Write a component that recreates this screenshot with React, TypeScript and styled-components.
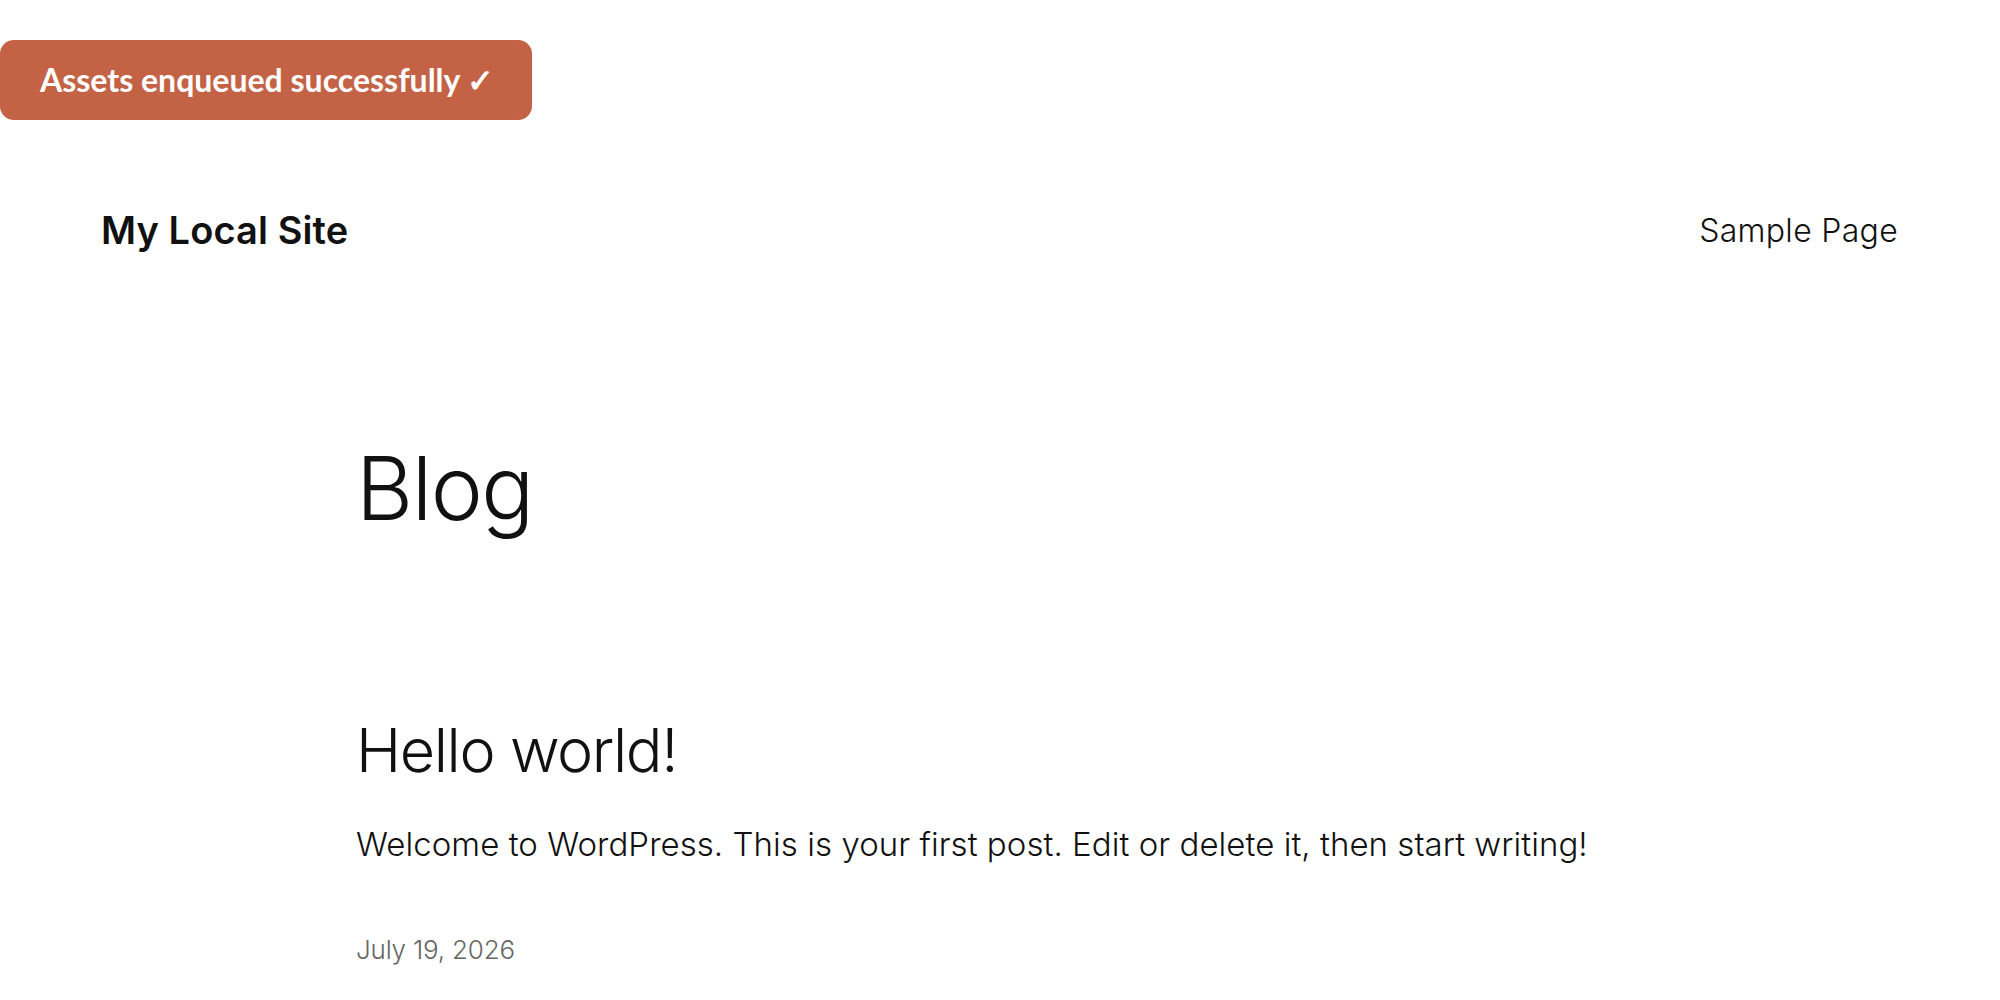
import React from 'react'
import styled, { createGlobalStyle } from 'styled-components'

const GlobalStyle = createGlobalStyle`
    html, body {
        margin: 0;
        padding: 0;
        background: #ffffff;
        color: #111111;
        font-family: Inter, "Noto Sans", sans-serif;
    }
`

const Page = styled.div`
    display: flex;
    flex-direction: column;
    padding-top: 40px;
`

const Notice = styled.div`
    align-self: flex-start;
    box-sizing: border-box;
    width: 532px;
    height: 80px;
    display: flex;
    align-items: center;
    padding-left: 40px;
    background-color: #c36244;
    border-radius: 14px;
    color: #ffffff;
    font-family: Lato, "Open Sans", sans-serif;
    font-weight: 700;
    font-size: 32px;
`

const Header = styled.header`
    display: flex;
    align-items: center;
    justify-content: space-between;
    padding: 0 102px 0 101px;
    height: 220px;
`

const SiteTitle = styled.a`
    font-size: 38px;
    font-weight: 600;
    letter-spacing: 0.1px;
    color: #111111;
    text-decoration: none;
`

const NavLink = styled.a`
    font-size: 32px;
    font-weight: 300;
    letter-spacing: 0.3px;
    color: #111111;
    text-decoration: none;
`

const Main = styled.main`
    display: flex;
    flex-direction: column;
    padding-left: 356px;
`

const PageTitle = styled.h1`
    margin: 100px 0 0;
    font-size: 88px;
    font-weight: 300;
    line-height: 1.1;
    letter-spacing: -1.5px;
`

const Post = styled.article`
    display: flex;
    flex-direction: column;
    margin-top: 180px;
`

const PostTitle = styled.h2`
    margin: 0;
    font-size: 61px;
    font-weight: 300;
    line-height: 1.1;
    letter-spacing: -1.4px;
`

const Excerpt = styled.p`
    margin: 40px 0 0;
    font-size: 33px;
    font-weight: 300;
    letter-spacing: 0.05px;
`

const PostDate = styled.time`
    margin-top: 70px;
    font-size: 26px;
    font-weight: 300;
    color: #666666;
    letter-spacing: -0.2px;
`

export default function App() {
    return (
        <Page>
            <GlobalStyle />
            <Notice>Assets enqueued successfully ✓</Notice>
            <Header>
                <SiteTitle href="#">My Local Site</SiteTitle>
                <NavLink href="#">Sample Page</NavLink>
            </Header>
            <Main>
                <PageTitle>Blog</PageTitle>
                <Post>
                    <PostTitle>Hello world!</PostTitle>
                    <Excerpt>Welcome to WordPress. This is your first post. Edit or delete it, then start writing!</Excerpt>
                    <PostDate>July 19, 2026</PostDate>
                </Post>
            </Main>
        </Page>
    )
}
